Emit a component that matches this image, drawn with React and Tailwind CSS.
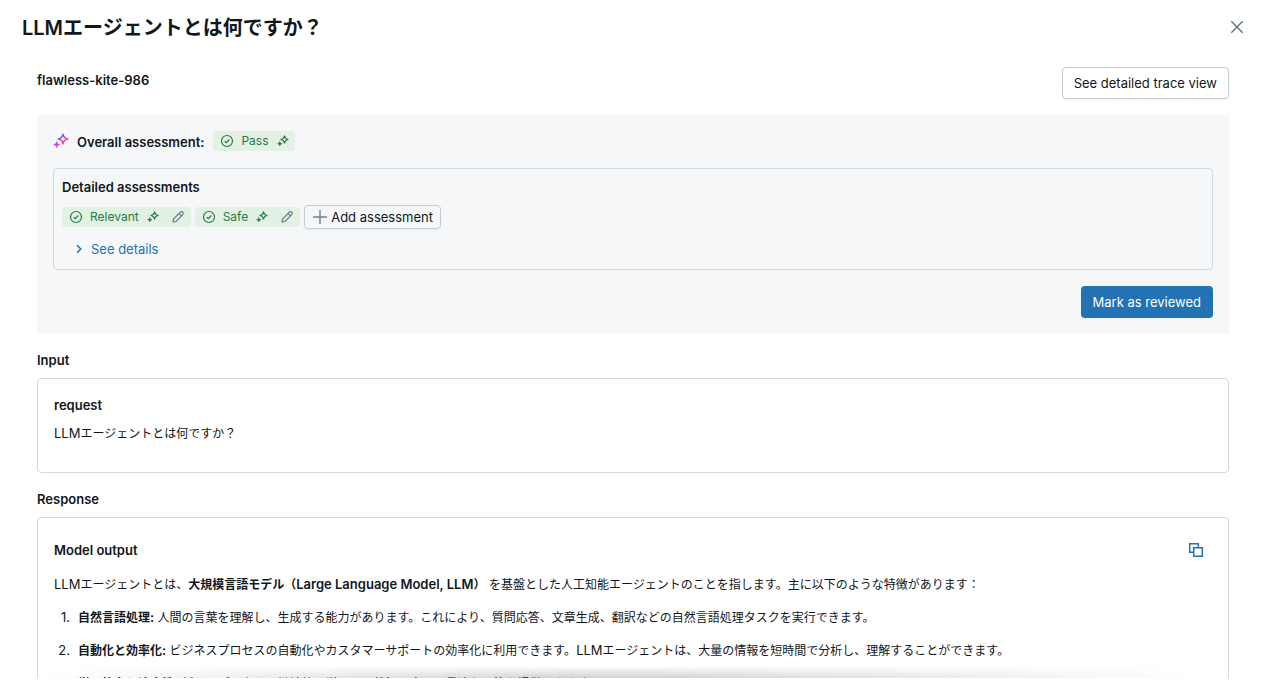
import React from "react";

const SPARKLE =
  "M10 1.2c.5 3 1.8 4.3 4.8 4.8-3 .5-4.3 1.8-4.8 4.8C9.500 7.800 8.200 6.500 5.200 6c3-.5 4.300-1.800 4.800-4.800Z";
const SPARKLE_SMALL =
  "M3.700 8.700c.3 1.900 1 2.600 2.900 2.900-1.900.3-2.600 1-2.900 2.900-.3-1.900-1-2.600-2.900-2.900 1.900-.3 2.600-1 2.900-2.900Z";

function Sparkles({ gradient = false }) {
  const paint = gradient ? "url(#sparkle-gradient)" : "currentColor";
  return (
    <svg
      viewBox="0 0 16 16"
      className={gradient ? "size-4 shrink-0" : "size-3 shrink-0"}
      fill="none"
      aria-hidden="true"
    >
      {gradient && (
        <defs>
          <linearGradient id="sparkle-gradient" x1="7" y1="1" x2="13" y2="9" gradientUnits="userSpaceOnUse">
            <stop offset="0.100" stopColor="#5a63f2" />
            <stop offset="0.450" stopColor="#b54ae6" />
            <stop offset="0.800" stopColor="#f5457f" />
          </linearGradient>
        </defs>
      )}
      <path d={SPARKLE} stroke={paint} strokeWidth="1.500" strokeLinejoin="round" />
      <path
        d={SPARKLE_SMALL}
        fill={gradient ? "#cf45dc" : paint}
        stroke={gradient ? "#cf45dc" : paint}
        strokeWidth="1"
      />
    </svg>
  );
}

function CheckCircle() {
  return (
    <svg viewBox="0 0 14 14" className="size-3.5 shrink-0" fill="none" stroke="currentColor" aria-hidden="true">
      <circle cx="7" cy="7" r="5.500" strokeWidth="1.200" />
      <path d="M4.700 7.200 6.300 8.700 9.300 5.500" strokeWidth="1.200" />
    </svg>
  );
}

function Pencil() {
  return (
    <svg
      viewBox="0 0 16 16"
      className="size-3.5"
      fill="none"
      stroke="currentColor"
      strokeWidth="1.300"
      strokeLinejoin="round"
      aria-hidden="true"
    >
      <path d="M2.300 13.700 2.800 10.400 10.700 2.500a1.900 1.900 0 0 1 2.700 2.700L5.600 13.200 2.300 13.700Z" />
      <path d="M9.300 4.100 11.900 6.700" />
    </svg>
  );
}

function Badge({ label, editable = false }) {
  return (
    <span className="flex h-5 items-center rounded-sm bg-[#e2f1e4] pr-1.5 pl-[7px] text-[#277c43]">
      <CheckCircle />
      <span className="ml-[7px] text-xs leading-5">{label}</span>
      <span className="ml-2 flex">
        <Sparkles />
      </span>
      {editable && (
        <button type="button" aria-label={`Edit ${label}`} className="ml-3 text-[#5f7281]">
          <Pencil />
        </button>
      )}
    </span>
  );
}

function Label({ children }) {
  return <h2 className="leading-5 font-semibold">{children}</h2>;
}

function Latin({ children }) {
  return <span className="text-[13px]">{children}</span>;
}

const ITEMS = [
  {
    term: "自然言語処理",
    text: "人間の言葉を理解し、生成する能力があります。これにより、質問応答、文章生成、翻訳などの自然言語処理タスクを実行できます。",
  },
  {
    term: "自動化と効率化",
    text: (
      <>
        ビジネスプロセスの自動化やカスタマーサポートの効率化に利用できます。<Latin>LLM</Latin>
        エージェントは、大量の情報を短時間で分析し、理解することができます。
      </>
    ),
  },
  {
    term: "学習能力と適応性",
    text: "新しいデータから継続的に学習し、状況に応じて最適な回答を提供できます。",
  },
];

export default function App() {
  return (
    <div className="h-screen overflow-hidden bg-white pb-0.5 font-[Inter,'Noto_Sans_CJK_JP',sans-serif] text-[13px] leading-5 text-[#11171c]">
      <div className="relative h-full overflow-hidden">
        <header className="flex h-[54px] items-center justify-between pr-4 pl-[22px]">
          <h1 className="pt-0.5 text-xl leading-7 font-semibold">LLMエージェントとは何ですか？</h1>
          <button type="button" aria-label="Close" className="text-[#5f7281]">
            <svg viewBox="0 0 16 16" className="size-4" fill="none" stroke="currentColor" strokeWidth="1.400" aria-hidden="true">
              <path d="M2.300 2.300 13.700 13.700M13.700 2.300 2.300 13.700" />
            </svg>
          </button>
        </header>

        <main className="pt-[13px] pr-8 pl-[37px]">
          <div className="flex items-start justify-between">
            <div className="pt-[3px]">
              <Label>flawless-kite-986</Label>
            </div>
            <button type="button" className="h-8 rounded-sm border border-[#c0cdd8] bg-white px-[11px] shadow-xs">
              See detailed trace view
            </button>
          </div>

          <section className="mt-4 bg-[#f6f7f9] p-4">
            <div className="flex h-5 items-center">
              <Sparkles gradient />
              <span className="mt-0.5 ml-2 font-semibold">Overall assessment:</span>
              <span className="ml-[9px]">
                <Badge label="Pass" />
              </span>
            </div>
            <div className="mt-[17px] rounded-sm border border-[#d1d9e1] px-2 pt-2 pb-2.5">
              <Label>Detailed assessments</Label>
              <div className="mt-2 flex items-center gap-1">
                <Badge label="Relevant" editable />
                <Badge label="Safe" editable />
                <button
                  type="button"
                  className="flex h-6 items-center gap-[3px] rounded-sm border border-[#c0cdd8] px-[7px] shadow-xs"
                >
                  <svg viewBox="0 0 16 16" className="size-4" stroke="#6f8090" strokeWidth="1.400" aria-hidden="true">
                    <path d="M8 1v14M1 8h14" />
                  </svg>
                  Add assessment
                </button>
              </div>
              <button type="button" className="mt-2.5 ml-[11px] flex items-center gap-1.5 text-[#2272b4]">
                <svg viewBox="0 0 12 12" className="size-3" fill="none" stroke="currentColor" strokeWidth="1.500" aria-hidden="true">
                  <path d="M4 2.300 7.800 6 4 9.700" />
                </svg>
                See details
              </button>
            </div>
            <div className="mt-4 flex justify-end">
              <button type="button" className="h-8 rounded-sm bg-[#2272b4] px-3 text-white">
                Mark as reviewed
              </button>
            </div>
          </section>

          <section className="mt-4">
            <Label>Input</Label>
            <div className="mt-2 rounded-sm border border-[#d1d9e1] px-4 pt-4 pb-7">
              <h3 className="font-semibold">request</h3>
              <p className="mt-2 text-xs leading-5">
                <Latin>LLM</Latin>エージェントとは何ですか？
              </p>
            </div>
          </section>

          <section className="mt-4">
            <Label>Response</Label>
            <div className="mt-2 rounded-sm border border-[#d1d9e1] px-4 py-4">
              <div className="flex h-8 items-center justify-between pr-2">
                <h3 className="font-semibold">Model output</h3>
                <button type="button" aria-label="Copy" className="text-[#2272b4]">
                  <svg viewBox="0 0 16 16" className="size-4" fill="none" stroke="currentColor" strokeWidth="1.500" aria-hidden="true">
                    <path d="M5.500 10.300H1.700V1.700h8.600v3.800" />
                    <path d="M5.700 5.700h8.600v8.600H5.700z" />
                  </svg>
                </button>
              </div>
              <p className="mt-2 text-xs leading-5">
                <Latin>LLM</Latin>エージェントとは、
                <strong className="font-semibold">
                  大規模言語モデル（<Latin>Large Language Model, LLM</Latin>）
                </strong>
                <Latin> </Latin>
                を基盤とした人工知能エージェントのことを指します。主に以下のような特徴があります：
              </p>
              <ol className="mt-3 flex flex-col gap-3 text-xs leading-5">
                {ITEMS.map((item, index) => (
                  <li key={item.term} className="flex gap-2">
                    <span className="w-4 shrink-0 text-right text-[13px]">{index + 1}.</span>
                    <span>
                      <strong className="font-semibold">
                        {item.term}
                        <Latin>:</Latin>
                      </strong>{" "}
                      {item.text}
                    </span>
                  </li>
                ))}
              </ol>
            </div>
          </section>
        </main>

        <div className="pointer-events-none absolute inset-x-0 bottom-0 h-3 bg-linear-to-t from-black/18 to-transparent mask-[linear-gradient(to_right,transparent_3%,black_45%,black_52%,transparent_95%)]" />
      </div>
    </div>
  );
}
